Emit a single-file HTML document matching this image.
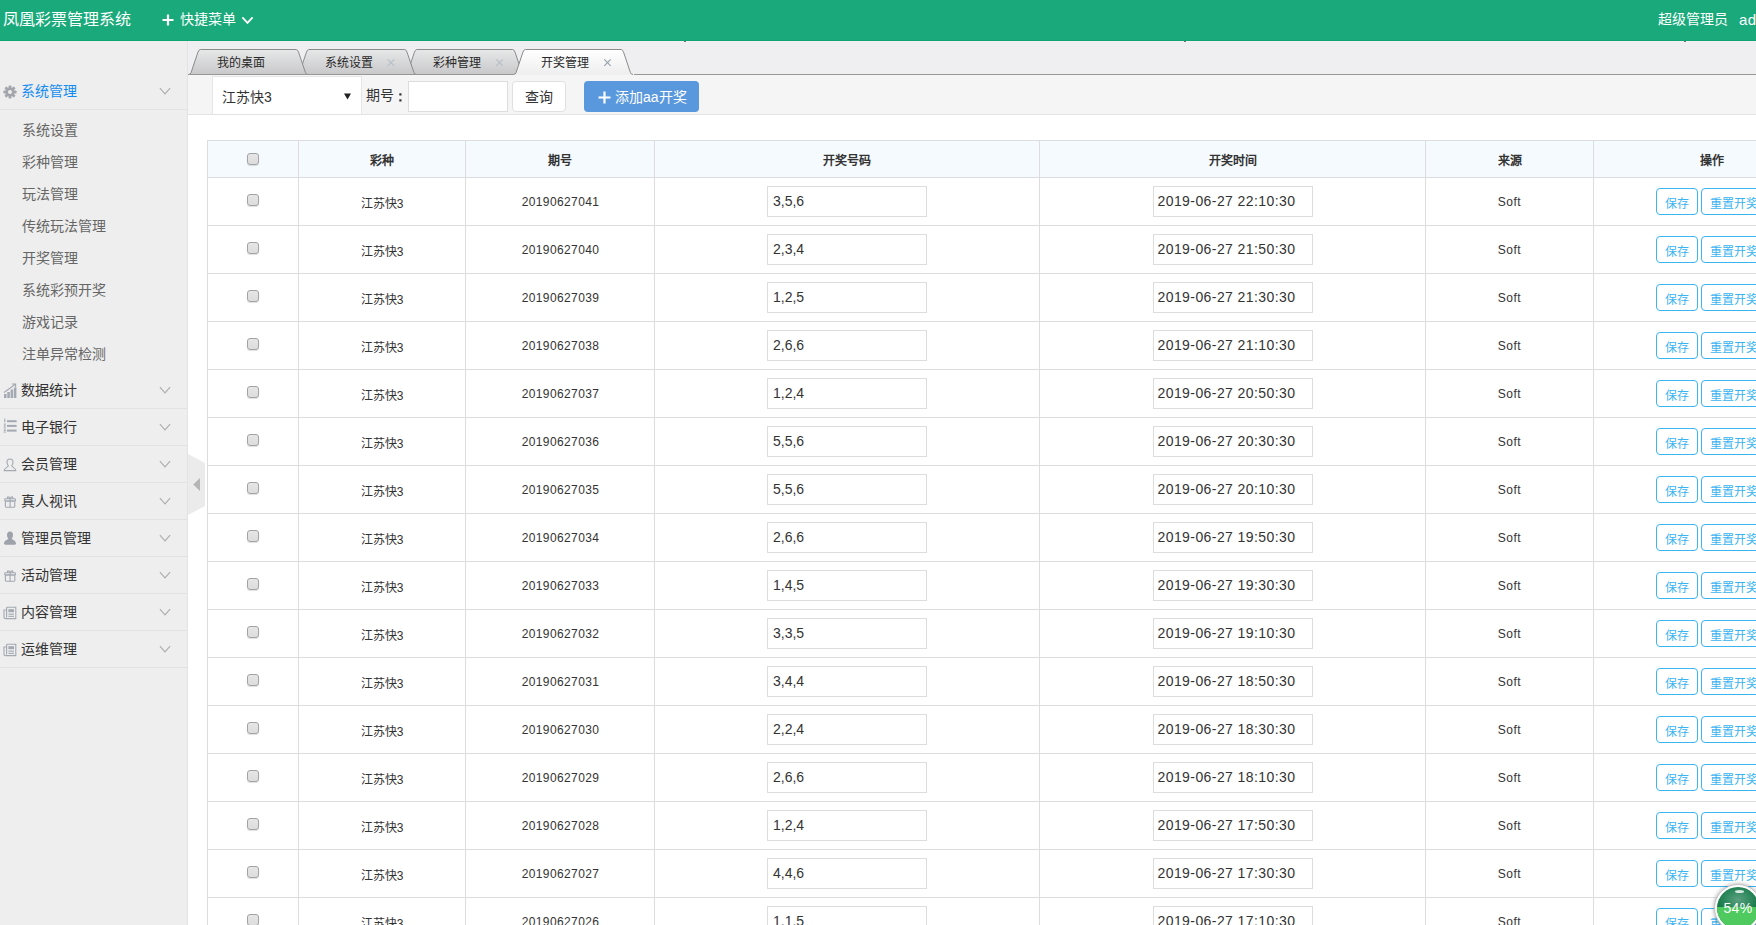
<!DOCTYPE html>
<html lang="zh-CN">
<head>
<meta charset="utf-8">
<title>凤凰彩票管理系统</title>
<style>
*{box-sizing:border-box;margin:0;padding:0}
html,body{width:1756px;height:925px;overflow:hidden;background:#fff}
body{font-family:"Liberation Sans",sans-serif;font-size:12px;color:#333;position:relative}
svg{display:block}
/* header */
#hd{position:absolute;left:0;top:0;width:1756px;height:41px;background:#19a97b;border-bottom:1px solid #0da572;color:#fff;overflow:hidden}
#hd .logo{position:absolute;left:3px;top:0;width:140px;line-height:40px;font-size:16px;white-space:nowrap;overflow:hidden}
#hd .quick{position:absolute;left:180px;top:0;width:60px;line-height:39px;font-size:14px;white-space:nowrap;overflow:hidden}
#hd .plus{position:absolute;left:162px;top:14px}
#hd .dn{position:absolute;left:241px;top:16px}
#hd .user{position:absolute;left:1658px;top:0;line-height:39px;font-size:14px;white-space:nowrap}
#hd .user b{font-weight:normal;position:absolute;left:81px;top:0;font-size:15px;letter-spacing:.3px}
/* sidebar */
#aside{position:absolute;left:0;top:41px;width:188px;height:884px;background:#eee;border-right:1px solid #e3e3e3;overflow:hidden}
#aside .menu{position:absolute;left:0;top:32px;width:187px}
#aside dt{display:block;height:37px;line-height:36px;border-bottom:1px solid #e2e2e2;font-size:14px;color:#333;padding-left:21px;position:relative;white-space:nowrap;overflow:hidden}
#aside dt.on{color:#148cf1}
#aside dt svg.ic{position:absolute;left:3px;top:12px}
#aside dt svg.chev{position:absolute;left:159px;top:14px}
#aside ul{list-style:none;padding:3px 0 3px 0}
#aside li{height:32px;line-height:34px;padding-left:22px;font-size:14px;color:#666;white-space:nowrap;overflow:hidden}
/* toggle */
#tog{position:absolute;left:188px;top:453px;width:18px;height:63px}
/* tabs */
#tabbar{position:absolute;left:188px;top:41px;width:1568px;height:34px;background:#efeff1;overflow:hidden}
#tabbar svg{position:absolute;left:0;top:0}
#tabbar>span{position:absolute;top:14px;height:16px;line-height:16px;width:56px;font-size:12px;color:#282828;white-space:nowrap;overflow:hidden}
#tabbar i{position:absolute;top:0;width:2px;height:1px;background:#6d6d6d}
#toolbar{position:absolute;left:188px;top:75px;width:1568px;height:40px;background:#f5f5f5;border-bottom:1px solid #e3e3e3}
.sel{position:absolute;left:24px;top:1px;width:150px;height:38px;background:#fff;border:1px solid #e6e6e6;border-bottom:0;font-size:14px;line-height:40px;padding-left:9px;color:#333;white-space:nowrap;overflow:hidden}
.sel svg{position:absolute;left:131px;top:16px}
.lbl{position:absolute;left:178px;top:0;width:32px;line-height:41px;font-size:14px;white-space:nowrap;overflow:hidden}
.col{position:absolute;left:211px;top:18px}
.qin{position:absolute;left:220px;top:6px;width:100px;height:31px;background:#fff;border:1px solid #ddd}
.qbtn{position:absolute;left:324px;top:6px;width:54px;height:31px;background:#fff;border:1px solid #e0e0e0;border-radius:4px;font-size:14px;line-height:30px;text-align:center;white-space:nowrap;overflow:hidden}
.addbtn{position:absolute;left:396px;top:6px;width:115px;height:31px;background:#5a98de;border-radius:4px;color:#fff;font-size:14px;line-height:32px;padding-left:31px;white-space:nowrap;overflow:hidden}
.addbtn svg{position:absolute;left:14px;top:10px}
/* table */
#tbl{position:absolute;left:207px;top:140px;width:1623px;border-collapse:separate;border-spacing:0;table-layout:fixed;border-top:1px solid #ddd;border-left:1px solid #ddd;font-size:12px}
#tbl th,#tbl td{border-right:1px solid #ddd;border-bottom:1px solid #ddd;text-align:center;vertical-align:middle;padding:0;white-space:nowrap;overflow:hidden}
#tbl th{height:37px;background:#f5fafe;font-weight:bold;color:#333}
#tbl td{height:48px;color:#333;padding-top:1px}
#tbl td.num{letter-spacing:.38px;padding-left:1px}
#tbl td.src{letter-spacing:.5px}
.cb{display:inline-block;width:12px;height:12px;border:1px solid #a3a3a3;border-radius:3px;background:linear-gradient(#e6e6e6,#dcdcdc);box-shadow:0 1px 1px rgba(0,0,0,.12);vertical-align:middle;position:relative;top:-3px;left:0}
th .cb{top:-1px}
.ti{display:inline-block;width:160px;height:31px;border:1px solid #ddd;background:#fff;font-size:14px;line-height:29px;text-align:left;padding-left:5px;color:#333;vertical-align:middle;white-space:nowrap;overflow:hidden;position:relative;top:-1px}
.ti.dt{letter-spacing:.42px;padding-left:4px}
.ops{text-align:left!important}
.b{display:inline-block;height:27px;line-height:27px;padding-top:2px;border:1px solid #3bb4f2;color:#3bb4f2;border-radius:4px;background:#fff;font-size:12px;text-align:center;vertical-align:middle;white-space:nowrap;overflow:hidden;position:relative;top:-1px}
.b1{width:42px;margin-left:62px}
.b2{width:66px;margin-left:3px}
.b3{width:42px;margin-left:3px}
/* badge */
#badge{position:absolute;left:1714px;top:884px;width:48px;height:48px;border-radius:50%;background:#fff;border:1px solid #c4c4c4;box-shadow:0 0 4px rgba(0,0,0,.35)}
#badge .in{position:absolute;left:2px;top:2px;width:42px;height:42px;border-radius:50%;overflow:hidden;background:radial-gradient(ellipse 60% 45% at 50% 30%,#5a9f7f 0,#2f8a5e 50%,#0b6c3c 100%)}
#badge .w{position:absolute;left:0;top:20px;width:42px;height:22px;background:#4fca5f}
#badge .hl{position:absolute;left:18px;top:3px;width:9px;height:3px;border-radius:50%;background:rgba(255,255,255,.8);filter:blur(.7px)}
#badge .t{position:absolute;left:-1px;top:14px;width:48px;text-align:center;font-size:14px;line-height:18px;color:#fff;letter-spacing:.3px}
.j{display:inline-block;text-align:justify;text-align-last:justify;white-space:nowrap}
</style>
</head>
<body>
<div id="hd">
  <div class="logo"><span class="j" style="width:128px">凤凰彩票管理系统</span></div>
  <svg class="plus" width="12" height="12" viewBox="0 0 12 12"><path d="M6 .5 V11.5 M.5 6 H11.5" stroke="#fff" stroke-width="2.2" fill="none"/></svg><div class="quick"><span class="j" style="width:56px">快捷菜单</span></div><svg class="dn" width="13" height="9" viewBox="0 0 13 9"><path d="M1.4 1.4 L6.5 6.9 L11.6 1.4" fill="none" stroke="#fff" stroke-width="1.8"/></svg>
  <div class="user"><span class="j" style="width:70px">超级管理员</span><b>admin</b></div>
</div>
<div id="aside">
  <dl class="menu">
    <dt class="on"><svg class="ic" width="14" height="14" viewBox="-7 -7 14 14"><g fill="#a2a5ab"><rect x="-1.4" y="-6.6" width="2.8" height="13.2" rx=".6"/><rect x="-1.4" y="-6.6" width="2.8" height="13.2" rx=".6" transform="rotate(45)"/><rect x="-1.4" y="-6.6" width="2.8" height="13.2" rx=".6" transform="rotate(90)"/><rect x="-1.4" y="-6.6" width="2.8" height="13.2" rx=".6" transform="rotate(135)"/><circle r="4.6"/></g><circle r="2" fill="#eee"/></svg><span class="j" style="width:56px">系统管理</span><svg class="chev" width="12" height="9" viewBox="0 0 12 9"><path d="M0.9 1.1 L6 6.9 L11.1 1.1" fill="none" stroke="#adadad" stroke-width="1.1"/></svg></dt>
    <dd><ul>
      <li><span class="j" style="width:56px">系统设置</span></li><li><span class="j" style="width:56px">彩种管理</span></li><li><span class="j" style="width:56px">玩法管理</span></li><li><span class="j" style="width:84px">传统玩法管理</span></li><li><span class="j" style="width:56px">开奖管理</span></li><li><span class="j" style="width:84px">系统彩预开奖</span></li><li><span class="j" style="width:56px">游戏记录</span></li><li><span class="j" style="width:84px">注单异常检测</span></li>
    </ul></dd>
    <dt><svg class="ic" width="14" height="16" viewBox="0 0 14 16" style="top:11px"><g fill="#a3a8b1"><rect x="1" y="11" width="2.5" height="4"/><rect x="4.3" y="9" width="2.5" height="6"/><rect x="7.6" y="6.5" width="2.5" height="8.5"/><rect x="10.9" y="4.5" width="2.5" height="10.5"/></g><path d="M1 9.5 L12 1.5 M8.8 1 L12.6 1 L12.6 4.6" fill="none" stroke="#a3a8b1" stroke-width="1.1"/></svg><span class="j" style="width:56px">数据统计</span><svg class="chev" width="12" height="9" viewBox="0 0 12 9"><path d="M0.9 1.1 L6 6.9 L11.1 1.1" fill="none" stroke="#adadad" stroke-width="1.1"/></svg></dt>
    <dt><svg class="ic" width="14" height="15" viewBox="0 0 14 15" style="top:9px"><g fill="#a3a8b1"><rect x="4" y="2.2" width="9.6" height="2"/><rect x="4" y="6.9" width="9.6" height="2"/><rect x="4" y="11.6" width="9.6" height="2"/><rect x="1.3" y="0.6" width="1.1" height="3.6"/><rect x="0.8" y="5.6" width="2" height="1"/><rect x="0.8" y="7.2" width="2" height="1"/><rect x="0.8" y="8.7" width="2" height="1"/><rect x="0.8" y="10.6" width="2" height="1"/><rect x="0.8" y="12.1" width="2" height="1"/><rect x="0.8" y="13.6" width="2" height="1"/></g></svg><span class="j" style="width:56px">电子银行</span><svg class="chev" width="12" height="9" viewBox="0 0 12 9"><path d="M0.9 1.1 L6 6.9 L11.1 1.1" fill="none" stroke="#adadad" stroke-width="1.1"/></svg></dt>
    <dt><svg class="ic" width="14" height="14" viewBox="0 0 14 14" style="top:12px"><path d="M7 1 C9 1 10 2.6 10 4.3 C10 6 9.2 7.2 8.6 7.8 C8.6 9 12.8 9.6 12.8 12.6 L1.2 12.6 C1.2 9.6 5.4 9 5.4 7.8 C4.8 7.2 4 6 4 4.3 C4 2.6 5 1 7 1 Z" fill="none" stroke="#a3a8b1" stroke-width="1.1"/></svg><span class="j" style="width:56px">会员管理</span><svg class="chev" width="12" height="9" viewBox="0 0 12 9"><path d="M0.9 1.1 L6 6.9 L11.1 1.1" fill="none" stroke="#adadad" stroke-width="1.1"/></svg></dt>
    <dt><svg class="ic" width="14" height="14" viewBox="0 0 14 14" style="top:12px"><g fill="none" stroke="#a3a8b1" stroke-width="1.1"><rect x="2.4" y="6" width="9.4" height="6.2" rx=".6"/><rect x="1.8" y="3.8" width="10.6" height="2.2" rx=".5"/><path d="M7.1 3.8 V12.2"/><path d="M7.1 3.6 C5.8 1 3.6 1.6 4.8 3.6 M7.1 3.6 C8.4 1 10.6 1.6 9.4 3.6"/></g></svg><span class="j" style="width:56px">真人视讯</span><svg class="chev" width="12" height="9" viewBox="0 0 12 9"><path d="M0.9 1.1 L6 6.9 L11.1 1.1" fill="none" stroke="#adadad" stroke-width="1.1"/></svg></dt>
    <dt><svg class="ic" width="14" height="15" viewBox="0 0 14 15" style="top:11px"><path d="M7 .6 C9 .6 10 2.2 10 4 C10 5.8 9.3 7 8.7 7.6 C8.7 8.8 13 9.4 13 12.6 C13 13.4 12.4 13.8 11.6 13.8 L2.4 13.8 C1.6 13.8 1 13.4 1 12.6 C1 9.4 5.3 8.8 5.3 7.6 C4.7 7 4 5.8 4 4 C4 2.2 5 .6 7 .6 Z" fill="#9ea3ab"/></svg><span class="j" style="width:70px">管理员管理</span><svg class="chev" width="12" height="9" viewBox="0 0 12 9"><path d="M0.9 1.1 L6 6.9 L11.1 1.1" fill="none" stroke="#adadad" stroke-width="1.1"/></svg></dt>
    <dt><svg class="ic" width="14" height="14" viewBox="0 0 14 14" style="top:12px"><g fill="none" stroke="#a3a8b1" stroke-width="1.1"><rect x="2.4" y="6" width="9.4" height="6.2" rx=".6"/><rect x="1.8" y="3.8" width="10.6" height="2.2" rx=".5"/><path d="M7.1 3.8 V12.2"/><path d="M7.1 3.6 C5.8 1 3.6 1.6 4.8 3.6 M7.1 3.6 C8.4 1 10.6 1.6 9.4 3.6"/></g></svg><span class="j" style="width:56px">活动管理</span><svg class="chev" width="12" height="9" viewBox="0 0 12 9"><path d="M0.9 1.1 L6 6.9 L11.1 1.1" fill="none" stroke="#adadad" stroke-width="1.1"/></svg></dt>
    <dt><svg class="ic" width="14" height="14" viewBox="0 0 14 14" style="top:12px"><g fill="none" stroke="#a3a8b1" stroke-width="1.1"><path d="M3.6 1.2 H12.8 V12.6 H2.4 C1.6 12.6 1 12 1 11.2 V4 H3.6"/><path d="M3.6 1.2 V11.4"/></g><g fill="#a3a8b1"><rect x="5.4" y="3.2" width="5.6" height="3"/><rect x="5.4" y="7.6" width="5.6" height="1.1"/><rect x="5.4" y="9.8" width="5.6" height="1.1"/></g></svg><span class="j" style="width:56px">内容管理</span><svg class="chev" width="12" height="9" viewBox="0 0 12 9"><path d="M0.9 1.1 L6 6.9 L11.1 1.1" fill="none" stroke="#adadad" stroke-width="1.1"/></svg></dt>
    <dt><svg class="ic" width="14" height="14" viewBox="0 0 14 14" style="top:12px"><g fill="none" stroke="#a3a8b1" stroke-width="1.1"><path d="M3.6 1.2 H12.8 V12.6 H2.4 C1.6 12.6 1 12 1 11.2 V4 H3.6"/><path d="M3.6 1.2 V11.4"/></g><g fill="#a3a8b1"><rect x="5.4" y="3.2" width="5.6" height="3"/><rect x="5.4" y="7.6" width="5.6" height="1.1"/><rect x="5.4" y="9.8" width="5.6" height="1.1"/></g></svg><span class="j" style="width:56px">运维管理</span><svg class="chev" width="12" height="9" viewBox="0 0 12 9"><path d="M0.9 1.1 L6 6.9 L11.1 1.1" fill="none" stroke="#adadad" stroke-width="1.1"/></svg></dt>
  </dl>
</div>
<div id="tabbar"><svg width="1568" height="34" viewBox="0 0 1568 34"><defs><linearGradient id="tg" x1="0" y1="0" x2="0" y2="1"><stop offset="0" stop-color="#e7e8e8"/><stop offset="1" stop-color="#c8c8ca"/></linearGradient><linearGradient id="ta" x1="0" y1="0" x2="0" y2="1"><stop offset="0" stop-color="#ffffff"/><stop offset="1" stop-color="#eeeeee"/></linearGradient></defs><rect x="0" y="0" width="1568" height="1" fill="#f6eef3"/><path d="M217.0 33.5 q1.8 0 2.6 -2 l6.6 -19.6 q1 -3.4 2.6 -3.4 H324.7 q1.6 0 2.6 3.4 l6.6 19.6 q.8 2 2.6 2" fill="url(#tg)" stroke="#8b8b8b" stroke-width="1"/><path d="M109.0 33.5 q1.8 0 2.6 -2 l6.6 -19.6 q1 -3.4 2.6 -3.4 H216.7 q1.6 0 2.6 3.4 l6.6 19.6 q.8 2 2.6 2" fill="url(#tg)" stroke="#8b8b8b" stroke-width="1"/><path d="M0.5 33.5 q1.8 0 2.6 -2 l6.6 -19.6 q1 -3.4 2.6 -3.4 H108.2 q1.6 0 2.6 3.4 l6.6 19.6 q.8 2 2.6 2" fill="url(#tg)" stroke="#8b8b8b" stroke-width="1"/><path d="M0 33.5 H326 M446 33.5 H1568" stroke="#979797" stroke-width="1" fill="none"/><path d="M325.5 33.5 q1.8 0 2.6 -2 l6.6 -19.6 q1 -3.4 2.6 -3.4 H433.2 q1.6 0 2.6 3.4 l6.6 19.6 q.8 2 2.6 2 V34 H325.5 Z" fill="url(#ta)" stroke="none"/><path d="M325.5 33.5 q1.8 0 2.6 -2 l6.6 -19.6 q1 -3.4 2.6 -3.4 H433.2 q1.6 0 2.6 3.4 l6.6 19.6 q.8 2 2.6 2" fill="none" stroke="#8b8b8b" stroke-width="1"/><path d="M199.8 18.4 l6.4 6.4 m0 -6.4 l-6.4 6.4" stroke="#b7bfc8" stroke-width="1.2" fill="none"/><path d="M308.3 18.4 l6.4 6.4 m0 -6.4 l-6.4 6.4" stroke="#b7bfc8" stroke-width="1.2" fill="none"/><path d="M416.3 18.4 l6.4 6.4 m0 -6.4 l-6.4 6.4" stroke="#98a2ac" stroke-width="1.2" fill="none"/></svg><span style="left:29px"><span class="j" style="width:48px">我的桌面</span></span><span style="left:137px"><span class="j" style="width:48px">系统设置</span></span><span style="left:245px"><span class="j" style="width:48px">彩种管理</span></span><span style="left:353px"><span class="j" style="width:48px">开奖管理</span></span><i style="left:496px"></i><i style="left:996px"></i><i style="left:1496px"></i></div>
<div id="toolbar">
  <div class="sel"><span class="j" style="width:49.8px">江苏快3</span><svg width="7" height="7" viewBox="0 0 7 7"><path d="M0 .4 H7 L3.5 6.6 Z" fill="#222"/></svg></div>
  <div class="lbl"><span class="j" style="width:28px">期号</span></div><svg class="col" width="3" height="9" viewBox="0 0 3 9"><rect x=".3" y=".3" width="2.2" height="2.2" fill="#333"/><rect x=".3" y="6.3" width="2.2" height="2.2" fill="#333"/></svg>
  <div class="qin"></div>
  <div class="qbtn"><span class="j" style="width:28px">查询</span></div>
  <div class="addbtn"><svg width="13" height="13" viewBox="0 0 13 13"><path d="M6.5 .5 V12.5 M.5 6.5 H12.5" stroke="#fff" stroke-width="2.2" fill="none"/></svg><span class="j" style="width:71.58px">添加aa开奖</span></div>
</div>
<div id="tog"><svg width="18" height="63" viewBox="0 0 18 63"><path d="M0 1 L17 10 V53 L0 62 Z" fill="#ebebeb"/><path d="M5.2 31.5 L12 25 V38 Z" fill="#b5b5b5"/></svg></div>
<table id="tbl">
<colgroup><col style="width:91px"><col style="width:167px"><col style="width:189px"><col style="width:385px"><col style="width:386px"><col style="width:168px"><col style="width:236px"></colgroup>
<thead><tr><th><span class="cb"></span></th><th><span class="j" style="width:24px">彩种</span></th><th><span class="j" style="width:24px">期号</span></th><th><span class="j" style="width:48px">开奖号码</span></th><th><span class="j" style="width:48px">开奖时间</span></th><th><span class="j" style="width:24px">来源</span></th><th><span class="j" style="width:24px">操作</span></th></tr></thead>
<tbody id="tb">
<tr><td><span class="cb"></span></td><td><span class="j" style="width:42.69px">江苏快3</span></td><td class="num">20190627041</td><td><span class="ti">3,5,6</span></td><td><span class="ti dt">2019-06-27 22:10:30</span></td><td class="src">Soft</td><td class="ops"><span class="b b1"><span class="j" style="width:24px">保存</span></span><span class="b b2"><span class="j" style="width:48px">重置开奖</span></span><span class="b b3"><span class="j" style="width:24px">删除</span></span></td></tr>
<tr><td><span class="cb"></span></td><td><span class="j" style="width:42.69px">江苏快3</span></td><td class="num">20190627040</td><td><span class="ti">2,3,4</span></td><td><span class="ti dt">2019-06-27 21:50:30</span></td><td class="src">Soft</td><td class="ops"><span class="b b1"><span class="j" style="width:24px">保存</span></span><span class="b b2"><span class="j" style="width:48px">重置开奖</span></span><span class="b b3"><span class="j" style="width:24px">删除</span></span></td></tr>
<tr><td><span class="cb"></span></td><td><span class="j" style="width:42.69px">江苏快3</span></td><td class="num">20190627039</td><td><span class="ti">1,2,5</span></td><td><span class="ti dt">2019-06-27 21:30:30</span></td><td class="src">Soft</td><td class="ops"><span class="b b1"><span class="j" style="width:24px">保存</span></span><span class="b b2"><span class="j" style="width:48px">重置开奖</span></span><span class="b b3"><span class="j" style="width:24px">删除</span></span></td></tr>
<tr><td><span class="cb"></span></td><td><span class="j" style="width:42.69px">江苏快3</span></td><td class="num">20190627038</td><td><span class="ti">2,6,6</span></td><td><span class="ti dt">2019-06-27 21:10:30</span></td><td class="src">Soft</td><td class="ops"><span class="b b1"><span class="j" style="width:24px">保存</span></span><span class="b b2"><span class="j" style="width:48px">重置开奖</span></span><span class="b b3"><span class="j" style="width:24px">删除</span></span></td></tr>
<tr><td><span class="cb"></span></td><td><span class="j" style="width:42.69px">江苏快3</span></td><td class="num">20190627037</td><td><span class="ti">1,2,4</span></td><td><span class="ti dt">2019-06-27 20:50:30</span></td><td class="src">Soft</td><td class="ops"><span class="b b1"><span class="j" style="width:24px">保存</span></span><span class="b b2"><span class="j" style="width:48px">重置开奖</span></span><span class="b b3"><span class="j" style="width:24px">删除</span></span></td></tr>
<tr><td><span class="cb"></span></td><td><span class="j" style="width:42.69px">江苏快3</span></td><td class="num">20190627036</td><td><span class="ti">5,5,6</span></td><td><span class="ti dt">2019-06-27 20:30:30</span></td><td class="src">Soft</td><td class="ops"><span class="b b1"><span class="j" style="width:24px">保存</span></span><span class="b b2"><span class="j" style="width:48px">重置开奖</span></span><span class="b b3"><span class="j" style="width:24px">删除</span></span></td></tr>
<tr><td><span class="cb"></span></td><td><span class="j" style="width:42.69px">江苏快3</span></td><td class="num">20190627035</td><td><span class="ti">5,5,6</span></td><td><span class="ti dt">2019-06-27 20:10:30</span></td><td class="src">Soft</td><td class="ops"><span class="b b1"><span class="j" style="width:24px">保存</span></span><span class="b b2"><span class="j" style="width:48px">重置开奖</span></span><span class="b b3"><span class="j" style="width:24px">删除</span></span></td></tr>
<tr><td><span class="cb"></span></td><td><span class="j" style="width:42.69px">江苏快3</span></td><td class="num">20190627034</td><td><span class="ti">2,6,6</span></td><td><span class="ti dt">2019-06-27 19:50:30</span></td><td class="src">Soft</td><td class="ops"><span class="b b1"><span class="j" style="width:24px">保存</span></span><span class="b b2"><span class="j" style="width:48px">重置开奖</span></span><span class="b b3"><span class="j" style="width:24px">删除</span></span></td></tr>
<tr><td><span class="cb"></span></td><td><span class="j" style="width:42.69px">江苏快3</span></td><td class="num">20190627033</td><td><span class="ti">1,4,5</span></td><td><span class="ti dt">2019-06-27 19:30:30</span></td><td class="src">Soft</td><td class="ops"><span class="b b1"><span class="j" style="width:24px">保存</span></span><span class="b b2"><span class="j" style="width:48px">重置开奖</span></span><span class="b b3"><span class="j" style="width:24px">删除</span></span></td></tr>
<tr><td><span class="cb"></span></td><td><span class="j" style="width:42.69px">江苏快3</span></td><td class="num">20190627032</td><td><span class="ti">3,3,5</span></td><td><span class="ti dt">2019-06-27 19:10:30</span></td><td class="src">Soft</td><td class="ops"><span class="b b1"><span class="j" style="width:24px">保存</span></span><span class="b b2"><span class="j" style="width:48px">重置开奖</span></span><span class="b b3"><span class="j" style="width:24px">删除</span></span></td></tr>
<tr><td><span class="cb"></span></td><td><span class="j" style="width:42.69px">江苏快3</span></td><td class="num">20190627031</td><td><span class="ti">3,4,4</span></td><td><span class="ti dt">2019-06-27 18:50:30</span></td><td class="src">Soft</td><td class="ops"><span class="b b1"><span class="j" style="width:24px">保存</span></span><span class="b b2"><span class="j" style="width:48px">重置开奖</span></span><span class="b b3"><span class="j" style="width:24px">删除</span></span></td></tr>
<tr><td><span class="cb"></span></td><td><span class="j" style="width:42.69px">江苏快3</span></td><td class="num">20190627030</td><td><span class="ti">2,2,4</span></td><td><span class="ti dt">2019-06-27 18:30:30</span></td><td class="src">Soft</td><td class="ops"><span class="b b1"><span class="j" style="width:24px">保存</span></span><span class="b b2"><span class="j" style="width:48px">重置开奖</span></span><span class="b b3"><span class="j" style="width:24px">删除</span></span></td></tr>
<tr><td><span class="cb"></span></td><td><span class="j" style="width:42.69px">江苏快3</span></td><td class="num">20190627029</td><td><span class="ti">2,6,6</span></td><td><span class="ti dt">2019-06-27 18:10:30</span></td><td class="src">Soft</td><td class="ops"><span class="b b1"><span class="j" style="width:24px">保存</span></span><span class="b b2"><span class="j" style="width:48px">重置开奖</span></span><span class="b b3"><span class="j" style="width:24px">删除</span></span></td></tr>
<tr><td><span class="cb"></span></td><td><span class="j" style="width:42.69px">江苏快3</span></td><td class="num">20190627028</td><td><span class="ti">1,2,4</span></td><td><span class="ti dt">2019-06-27 17:50:30</span></td><td class="src">Soft</td><td class="ops"><span class="b b1"><span class="j" style="width:24px">保存</span></span><span class="b b2"><span class="j" style="width:48px">重置开奖</span></span><span class="b b3"><span class="j" style="width:24px">删除</span></span></td></tr>
<tr><td><span class="cb"></span></td><td><span class="j" style="width:42.69px">江苏快3</span></td><td class="num">20190627027</td><td><span class="ti">4,4,6</span></td><td><span class="ti dt">2019-06-27 17:30:30</span></td><td class="src">Soft</td><td class="ops"><span class="b b1"><span class="j" style="width:24px">保存</span></span><span class="b b2"><span class="j" style="width:48px">重置开奖</span></span><span class="b b3"><span class="j" style="width:24px">删除</span></span></td></tr>
<tr><td><span class="cb"></span></td><td><span class="j" style="width:42.69px">江苏快3</span></td><td class="num">20190627026</td><td><span class="ti">1,1,5</span></td><td><span class="ti dt">2019-06-27 17:10:30</span></td><td class="src">Soft</td><td class="ops"><span class="b b1"><span class="j" style="width:24px">保存</span></span><span class="b b2"><span class="j" style="width:48px">重置开奖</span></span><span class="b b3"><span class="j" style="width:24px">删除</span></span></td></tr>
</tbody>
</table>
<div id="badge"><div class="in"><div class="w"></div><div class="hl"></div></div><div class="t">54%</div></div>
</body>
</html>
